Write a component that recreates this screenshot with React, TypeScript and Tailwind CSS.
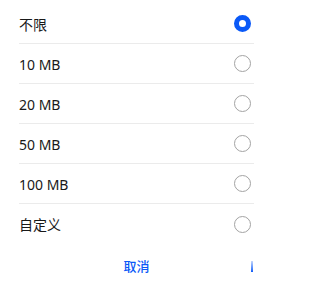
const options = ["不限", "10 MB", "20 MB", "50 MB", "100 MB", "自定义"];

function Radio({ checked }: { checked: boolean }) {
  if (checked) {
    return <span className="block w-[17px] h-[17px] rounded-full border-[5px] border-[#0a59f7] bg-white" />;
  }
  return <span className="block w-[17px] h-[17px] rounded-full border border-[#a3a3a3] bg-white" />;
}

export default function App() {
  return (
    <div
      className="w-[273px] h-[285px] bg-white overflow-hidden"
      style={{ fontFamily: '"Noto Sans", "Noto Sans CJK SC", sans-serif' }}
    >
      <ul className="pt-[4px] px-[19px]">
        {options.map((label, i) => (
          <li
            key={label}
            className={`flex items-center justify-between h-[40px] pr-[3px] ${
              i < options.length - 1 ? "border-b border-[#ebebeb]" : ""
            }`}
          >
            <span className="text-[14px] text-[#191919] leading-none pt-[2px]">{label}</span>
            <Radio checked={i === 0} />
          </li>
        ))}
      </ul>

      {/* Buttons */}
      <div className="grid grid-cols-[1fr_auto_1fr] items-center h-[42px] mt-[1px]">
        <span />
        <span className="text-[13px] font-medium text-[#0a59f7] leading-none">取消</span>
        <span className="pl-[101px] flex items-center">
          <span className="block w-[2px] h-[11px] bg-gradient-to-b from-[#c6d7fb] to-[#0a59f7]" />
        </span>
      </div>
    </div>
  );
}
